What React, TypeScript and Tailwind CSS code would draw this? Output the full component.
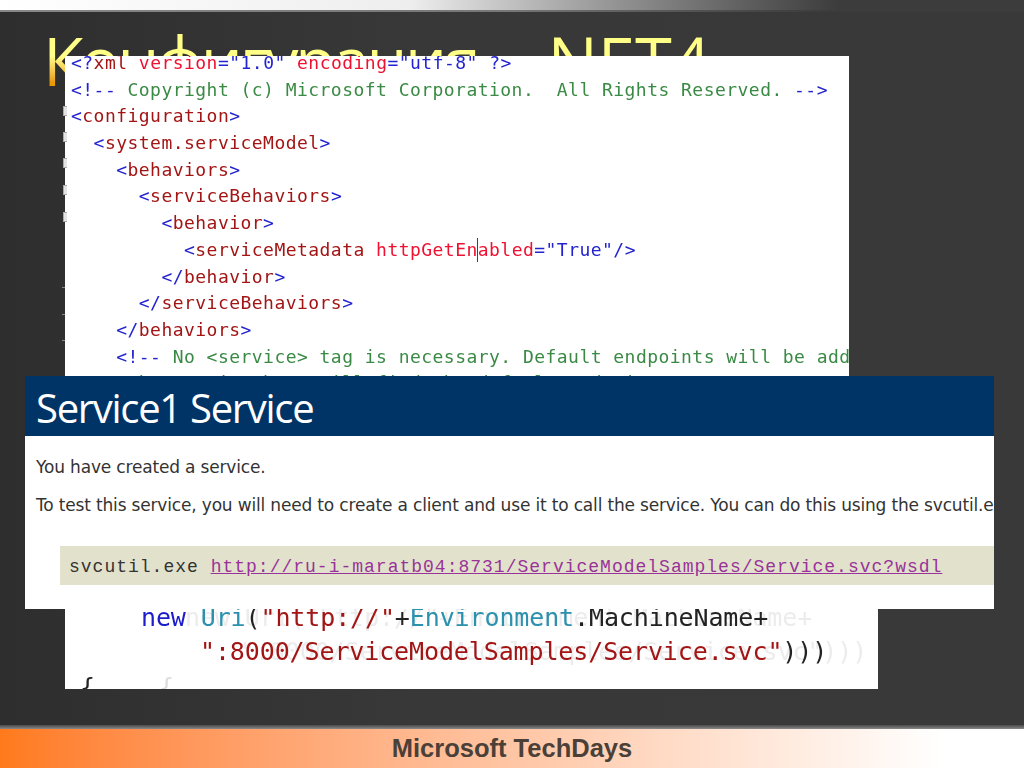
const B = "#2323d0";
const R = "#a31515";
const A = "#f01030";
const G = "#3a8a45";
const code: { i: number; parts: [string, string][] }[] = [
  { i: 0, parts: [["<?", B], ["xml", R], [" ", ""], ["version", A], ["=", B], ['"1.0"', B], [" ", ""], ["encoding", A], ["=", B], ['"utf-8"', B], [" ?>", B]] },
  { i: 0, parts: [["<!--", B], [" Copyright (c) Microsoft Corporation.  All Rights Reserved. ", G], ["-->", B]] },
  { i: 0, parts: [["<", B], ["configuration", R], [">", B]] },
  { i: 2, parts: [["<", B], ["system.serviceModel", R], [">", B]] },
  { i: 4, parts: [["<", B], ["behaviors", R], [">", B]] },
  { i: 6, parts: [["<", B], ["serviceBehaviors", R], [">", B]] },
  { i: 8, parts: [["<", B], ["behavior", R], [">", B]] },
  { i: 10, parts: [["<", B], ["serviceMetadata", R], [" ", ""], ["httpGetEnabled", A], ["=", B], ['"True"', B], ["/>", B]] },
  { i: 8, parts: [["</", B], ["behavior", R], [">", B]] },
  { i: 6, parts: [["</", B], ["serviceBehaviors", R], [">", B]] },
  { i: 4, parts: [["</", B], ["behaviors", R], [">", B]] },
  { i: 4, parts: [["<!--", B], [" No <service> tag is necessary. Default endpoints will be added", G]] },
  { i: 5, parts: [["the service host will find the default endpoints", G]] },
];

const foldBoxes = ["top-[106px]", "top-[132px]", "top-[158px]", "top-[185px]", "top-[212px]"];
const ticks = ["top-[287px]", "top-[314px]", "top-[340px]"];

export default function App() {
  return (
    <div className="relative flex h-[768px] w-[1024px] flex-col overflow-hidden bg-gradient-to-r from-[#2e2e2e] via-[#393838] via-40% to-[#3a3939] font-['Liberation_Sans',sans-serif]">
      <div className="h-[10px] bg-gradient-to-r from-white via-[#eeeeee] via-40% to-[#3c3c3c] to-82%" />
      <div className="h-[2px] bg-gradient-to-r from-[#888888] via-[#777777] via-50% to-[#3c3c3c] to-80%" />
      <div className="flex-1" />

      <h1 className="absolute left-[43px] top-[20px] whitespace-pre bg-gradient-to-b from-[#ffff88] from-45% to-[#e89a00] to-78% bg-clip-text font-['Open_Sans',sans-serif] text-[67px] font-normal leading-[80px] text-transparent [word-spacing:35px]">
        <span className="tracking-[-3.5px]">Конфигурация</span> .NET4
      </h1>

      <div className="absolute left-[65px] top-[56px] h-[330px] w-[784px] overflow-hidden bg-white font-['DejaVu_Sans_Mono',monospace] text-[18px] leading-[26.7px] tracking-[0.46px] blur-[0.3px]">
        <div className="-mt-[6px] pl-[6px]">
          {code.map((l, n) => (
            <div key={n} className="h-[26.7px] whitespace-pre">
              {" ".repeat(l.i)}
              {l.parts.map(([t, c], k) => (
                <span key={k} style={{ color: c }}>{t}</span>
              ))}
            </div>
          ))}
        </div>
        <span className="absolute left-[412px] top-[182px] h-[24px] w-px bg-[#444444]" />
      </div>

      {foldBoxes.map((t) => (
        <span key={t} className={`absolute left-[63px] h-[10px] w-[4px] border border-r-0 border-[#aaaaaa] bg-[#e4e4e4] ${t}`} />
      ))}
      {ticks.map((t) => (
        <span key={t} className={`absolute left-[62px] h-px w-[3px] bg-[#888888] ${t}`} />
      ))}

      <div className="absolute left-[65px] top-[600px] h-[89px] w-[813px] overflow-hidden bg-white font-['DejaVu_Sans_Mono',monospace] text-[25px] leading-[34px] tracking-[-0.12px] blur-[0.4px]">
        <div className="absolute left-[120px] top-px whitespace-pre text-[#ececec]">{'new Uri("http://"+Environment.MachineName+'}</div>
        <div className="absolute left-[175px] top-[35px] whitespace-pre text-[#ececec]">{'":8000/ServiceModelSamples/Service.svc")))'}</div>
        <span className="absolute left-[94px] top-[71px] text-[#dddddd]">{"{"}</span>
        <div className="relative whitespace-pre pl-[76px] pt-px">
          <span className="text-[#1c1ccc]">new</span> <span className="text-[#2b91af]">Uri</span>
          <span className="text-[#222222]">(</span>
          <span className="text-[#a31515]">"http://"</span>
          <span className="text-[#222222]">+</span>
          <span className="text-[#2b91af]">Environment</span>
          <span className="text-[#222222]">.MachineName+</span>
        </div>
        <div className="relative whitespace-pre pl-[135px]">
          <span className="text-[#a31515]">":8000/ServiceModelSamples/Service.svc"</span>
          <span className="text-[#222222]">)))</span>
        </div>
        <div className="relative mt-[2px] pl-[15px] text-[#222222]">{"{"}</div>
      </div>

      <div className="absolute left-[25px] top-[376px] h-[233px] w-[969px] overflow-hidden bg-white">
        <div className="h-[60px] bg-[#003366] pl-[11px] font-['Open_Sans',sans-serif] text-[40px] leading-[64px] tracking-[-1.3px] text-white">
          Service1 Service
        </div>
        <div className="whitespace-nowrap pl-[11px] font-['DejaVu_Sans',sans-serif] text-[17px] tracking-[-0.17px] text-[#333333]">
          <p className="mt-[22px] leading-[18px]">You have created a service.</p>
          <p className="mt-[20px] leading-[18px]">To test this service, you will need to create a client and use it to call the service. You can do this using the svcutil.exe tool</p>
        </div>
        <div className="ml-[35px] mt-[32px] h-[39px] whitespace-pre bg-[#e2e2cc] pl-[9px] font-['Liberation_Mono',monospace] text-[18px] leading-[42px] tracking-[1px] text-[#333333]">
          svcutil.exe <span className="text-[#993399] underline">http://ru-i-maratb04:8731/ServiceModelSamples/Service.svc?wsdl</span>
        </div>
      </div>

      <div className="h-[4px] bg-gradient-to-b from-[#4a4a4a] to-[#8a8a8a]" />
      <div className="h-[39px] bg-gradient-to-r from-[#ff7a1a] to-white to-92% text-center text-[25.5px] font-bold leading-[39px] text-[#4a4038]">
        Microsoft TechDays
      </div>
    </div>
  );
}
